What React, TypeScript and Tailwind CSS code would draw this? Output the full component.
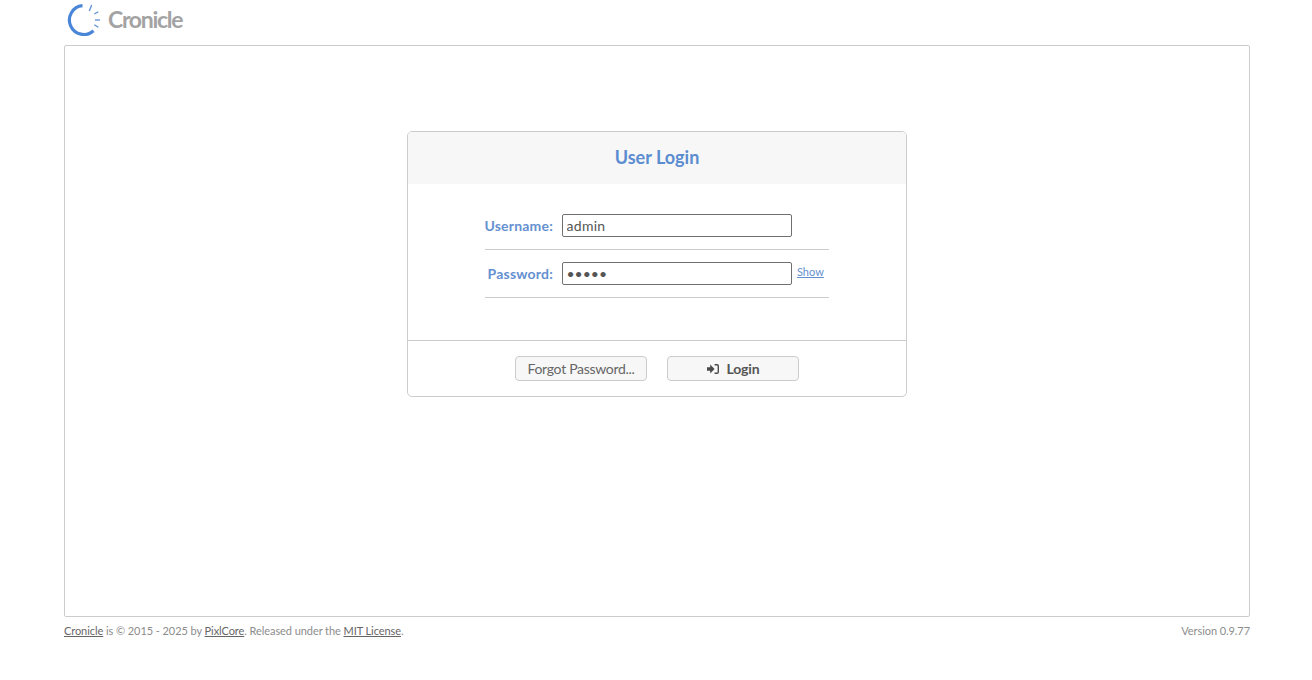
import { useState } from "react";

const LOGO_TICKS = [
    "M25.7 4 L23.3 10",
    "M32.3 10.7 L28.3 13",
    "M34 19 L29 19",
    "M32.3 26.3 L28.3 23.7",
];

const Logo = () => (
    <svg width="36" height="38" viewBox="0 0 36 38" className="shrink-0">
        <path d="M16.5 4.7 A14.4 14.4 0 1 0 27.5 29.7" fill="none" stroke="#4a86d8" strokeWidth="3.2" />
        {LOGO_TICKS.map((d) => (
            <path key={d} d={d} fill="none" stroke="#5b8fd6" strokeWidth="1.3" />
        ))}
    </svg>
);

const LoginIcon = () => (
    <svg width="12" height="10" viewBox="0 0 12 10" className="shrink-0">
        <path d="M0 3.2 H3.2 V0.6 L7.6 5 L3.2 9.4 V6.8 H0 Z" fill="#4a4a4a" />
        <path d="M7.6 0.8 H10 Q11.3 0.8 11.3 2.1 V7.9 Q11.3 9.2 10 9.2 H7.6" fill="none" stroke="#4a4a4a" strokeWidth="1.4" />
    </svg>
);

const App = () => {
    const [username] = useState("admin");
    const [password] = useState("admin");

    return (
        <div className="w-[1312px] h-[680px] bg-white font-['Lato','Liberation_Sans',sans-serif] overflow-hidden">
            <div className="mx-[64px] w-[1186px]">
                <div className="h-[45px] flex items-start pl-[2px] pt-[1px]">
                    <Logo />
                    <span className="ml-[6px] mt-[3px] text-[23px] leading-[30px] font-bold text-[#a3a3a3] tracking-[-1.3px]">Cronicle</span>
                </div>

                <div className="h-[572px] border border-[#cccccc] rounded-[2px] pt-[85px]">
                    <div className="ml-[342px] w-[500px] h-[266px] border border-[#cccccc] rounded-[5px] flex flex-col overflow-hidden">
                        <div className="h-[52px] pb-[2px] bg-[#f7f7f7] flex items-center justify-center text-[18px] font-bold text-[#5b8dd0]">
                            User Login
                        </div>

                        <div className="flex-1 pt-[30px] pl-[77px]">
                            <div className="w-[344px] h-[36px] border-b border-[#cccccc] flex items-start">
                                <label className="w-[68px] h-[23px] flex items-center justify-end text-[14px] font-bold text-[#6590d0] tracking-[0.2px]">Username:</label>
                                <input
                                    readOnly
                                    value={username}
                                    className="ml-[9px] w-[230px] h-[23px] border border-[#707070] rounded-[2px] px-[3.5px] text-[14px] text-[#555555] font-['Lato',sans-serif] tracking-[0.3px] outline-none"
                                />
                            </div>
                            <div className="w-[344px] h-[48px] pt-[12px] border-b border-[#cccccc] flex items-start">
                                <label className="w-[68px] h-[23px] flex items-center justify-end text-[14px] font-bold text-[#6590d0] tracking-[0.2px]">Password:</label>
                                <input
                                    readOnly
                                    type="password"
                                    value={password}
                                    className="ml-[9px] w-[230px] h-[23px] border border-[#707070] rounded-[2px] px-[3.5px] text-[14px] text-[#555555] font-['Lato',sans-serif] outline-none"
                                />
                                <a href="#" className="ml-[5px] text-[11px] leading-[20px] text-[#6590d0] underline">Show</a>
                            </div>
                        </div>

                        <div className="h-[56px] border-t border-[#cccccc] pt-[15px] pl-[107px] flex items-start gap-[20px]">
                            <button className="w-[132px] h-[25px] border border-[#cccccc] rounded-[4px] bg-[#f7f7f7] text-[14px] text-[#666666] tracking-[-0.3px]">
                                Forgot Password...
                            </button>
                            <button className="w-[132px] h-[25px] border border-[#cccccc] rounded-[4px] bg-[#f7f7f7] text-[14px] font-bold text-[#555555] tracking-[-0.1px] flex items-center justify-center gap-[7px] pl-[1px]">
                                <LoginIcon />
                                Login
                            </button>
                        </div>
                    </div>
                </div>

                <div className="mt-[6px] flex justify-between text-[11px] leading-[16px] text-[#8c8c8c] tracking-[-0.07px]">
                    <div>
                        <a href="#" className="text-[#666666] underline">Cronicle</a> is © 2015 - 2025 by{" "}
                        <a href="#" className="text-[#666666] underline">PixlCore</a>. Released under the{" "}
                        <a href="#" className="text-[#666666] underline">MIT License</a>.
                    </div>
                    <div>Version 0.9.77</div>
                </div>
            </div>
        </div>
    );
};

export default App;
